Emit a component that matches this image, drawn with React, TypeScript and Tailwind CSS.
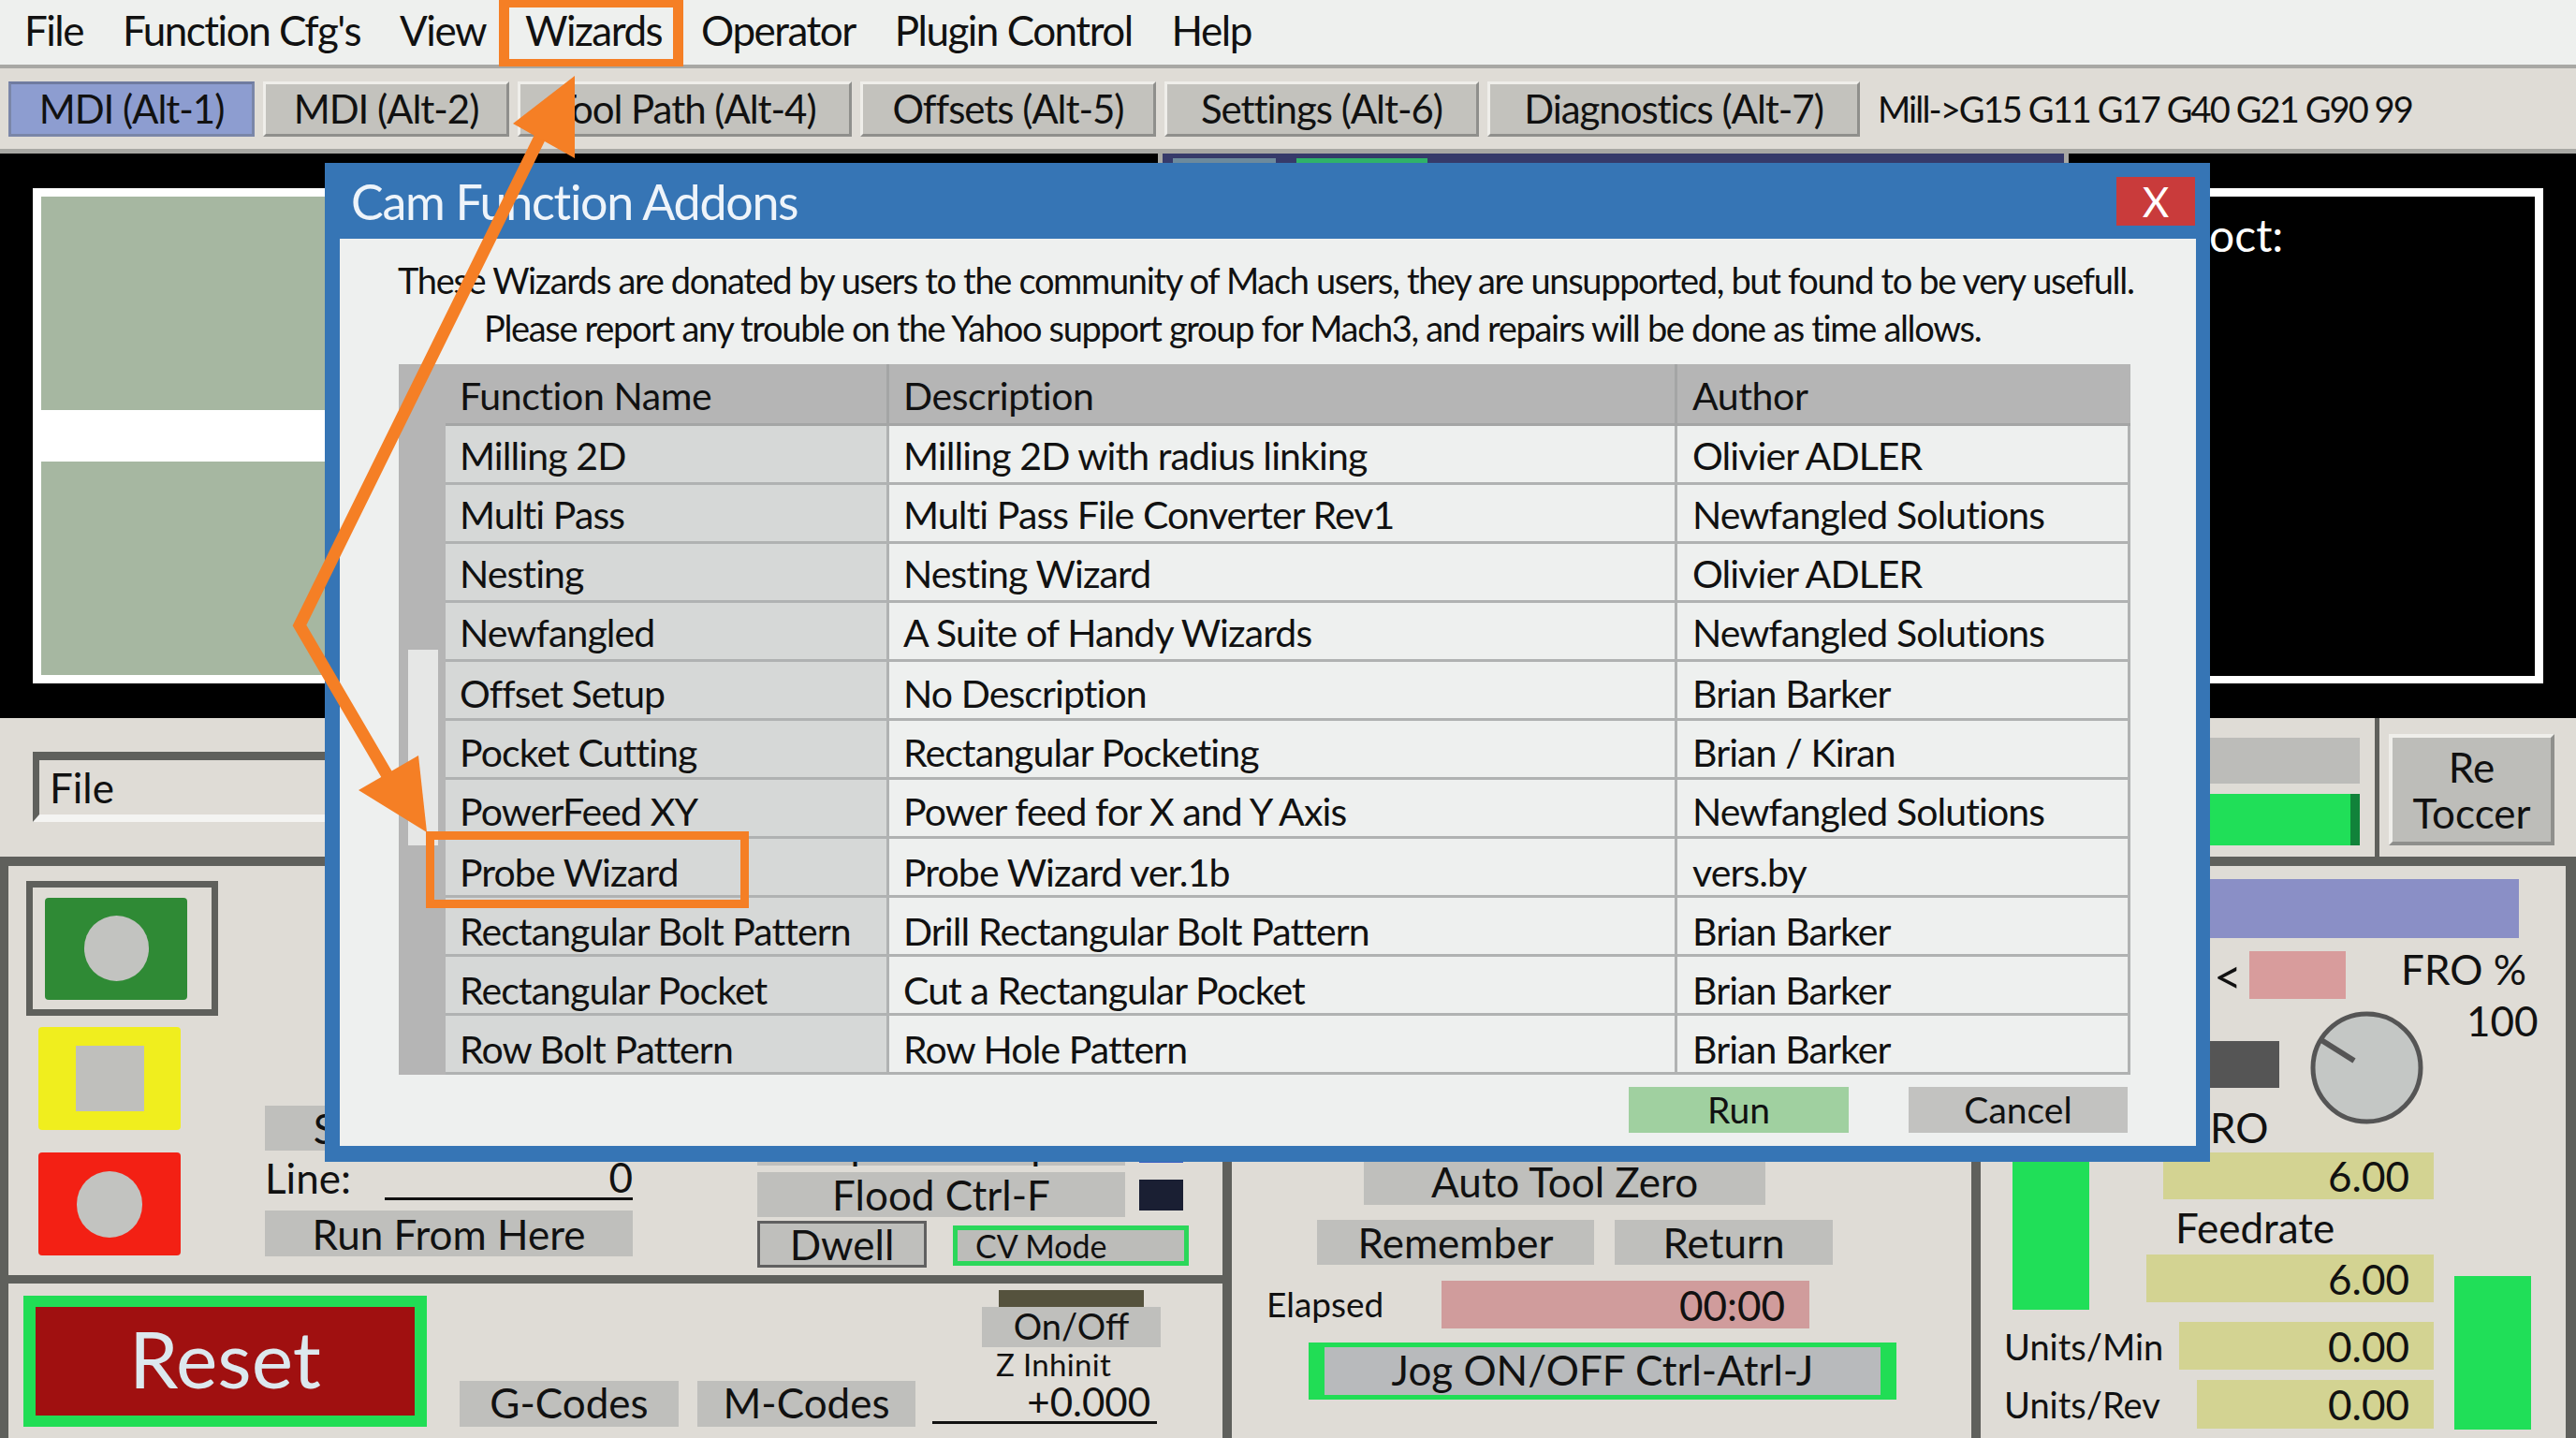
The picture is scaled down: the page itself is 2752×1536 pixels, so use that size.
const menus = ["File", "Function Cfg's", "View", "Wizards", "Operator", "Plugin Control", "Help"];

const tabs = [
  { label: "MDI (Alt-1)", w: "w-[263px]", active: true },
  { label: "MDI (Alt-2)", w: "w-[263px]" },
  { label: "Tool Path (Alt-4)", w: "w-[357px]" },
  { label: "Offsets (Alt-5)", w: "w-[316px]" },
  { label: "Settings (Alt-6)", w: "w-[336px]" },
  { label: "Diagnostics (Alt-7)", w: "w-[398px]" },
];

const rows = [
  ["Milling 2D", "Milling 2D with radius linking", "Olivier ADLER"],
  ["Multi Pass", "Multi Pass File Converter Rev1", "Newfangled Solutions"],
  ["Nesting", "Nesting Wizard", "Olivier ADLER"],
  ["Newfangled", "A Suite of Handy Wizards", "Newfangled Solutions"],
  ["Offset Setup", "No Description", "Brian Barker"],
  ["Pocket Cutting", "Rectangular Pocketing", "Brian / Kiran"],
  ["PowerFeed XY", "Power feed for X and Y Axis", "Newfangled Solutions"],
  ["Probe Wizard", "Probe Wizard ver.1b", "vers.by"],
  ["Rectangular Bolt Pattern", "Drill Rectangular Bolt Pattern", "Brian Barker"],
  ["Rectangular Pocket", "Cut a Rectangular Pocket", "Brian Barker"],
  ["Row Bolt Pattern", "Row Hole Pattern", "Brian Barker"],
];

function Btn({ className, children }: { className: string; children: React.ReactNode }) {
  return <div className={`flex shrink-0 items-center justify-center bg-[#bfbfbc] text-[#111] ${className}`}>{children}</div>;
}

function Dro({ className, value }: { className: string; value: string }) {
  return (
    <div className={`flex shrink-0 items-center justify-end bg-[#d3d392] pr-[26px] text-[#111] ${className}`}>{value}</div>
  );
}

function Dialog() {
  return (
    <div className="absolute left-[347px] top-[174px] flex h-[1067px] w-[2014px] flex-col bg-[#3675b5] pb-[17px] pl-[16px] pr-[15px]">
      <div className="flex h-[81px] shrink-0 items-center justify-between">
        <span className="pl-[12px] text-[52px] leading-none tracking-[-0.025em] text-[#eef4fa]">Cam Function Addons</span>
        <div className="mr-[1px] flex h-[52px] w-[84px] items-center justify-center bg-[#c93b3b] text-[44px] leading-none text-white">X</div>
      </div>
      <div className="min-h-0 flex-1 bg-[#eef0ef] pt-[19px] text-[#111]">
        <p className="whitespace-nowrap pl-[62px] text-[38px] leading-[51px] tracking-[-0.035em]">These Wizards are donated by users to the community of Mach users, they are unsupported, but found to be very usefull.</p>
        <p className="whitespace-nowrap pl-[154px] text-[38px] leading-[51px] tracking-[-0.035em]">Please report any trouble on the Yahoo support group for Mach3, and repairs will be done as time allows.</p>
        <div className="ml-[63px] mt-[13px] flex w-[1850px]">
          <div className="w-[50px] shrink-0 bg-[#b5b5b5] pl-[10px] pt-[305px]">
            <div className="h-[209px] w-[32px] bg-[#e6e7e6]" />
          </div>
          <div className="flex-1">
            <div className="grid h-[66px] grid-cols-[474px_842px_484px] bg-[#b5b5b5] text-[41px] tracking-[-0.01em]">
              <div className="flex items-center border-b-[3px] border-r-[3px] border-[#a4a5a5] pl-[15px] pt-[3px]">Function Name</div>
              <div className="flex items-center border-b-[3px] border-r-[3px] border-[#a4a5a5] pl-[15px] pt-[3px]">Description</div>
              <div className="flex items-center border-b-[3px] border-[#a4a5a5] pl-[16px] pt-[3px]">Author</div>
            </div>
            {rows.map((row, i) => {
              const nudge = i > 6 ? "pt-[10px]" : i > 3 ? "pt-[7px]" : "pt-[3px]";
              return (
                <div key={row[0]} className="grid h-[63px] grid-cols-[474px_842px_484px] text-[41px] tracking-[-0.022em]">
                  <div className={`flex items-center border-b-[3px] border-r-[3px] border-[#b0b2b2] bg-[#d6d8d7] pl-[15px] ${nudge}`}>{row[0]}</div>
                  <div className={`flex items-center border-b-[3px] border-r-[3px] border-[#b0b2b2] pl-[15px] ${nudge}`}>{row[1]}</div>
                  <div className={`flex items-center border-b-[3px] border-r-[3px] border-[#b0b2b2] pl-[16px] ${nudge}`}>{row[2]}</div>
                </div>
              );
            })}
          </div>
        </div>
        <div className="mt-[13px] flex justify-end gap-[64px] pr-[73px] text-[39px]">
          <div className="flex h-[49px] w-[235px] items-center justify-center bg-[#a0d0a0]">Run</div>
          <div className="flex h-[49px] w-[234px] items-center justify-center bg-[#c2c2c0]">Cancel</div>
        </div>
      </div>
    </div>
  );
}

export default function App() {
  return (
    <div className="relative flex h-[1536px] w-[2752px] flex-col overflow-hidden bg-[#dfdcd6] text-[44px] leading-none text-[#111] [font-family:Lato,sans-serif]">
      {/* menu bar */}
      <div className="flex h-[73px] shrink-0 items-center gap-[42px] border-b-[4px] border-[#a8a8a4] bg-[#eef0ee] pb-[6px] pl-[26px] text-[44px] tracking-[-0.034em]">
        {menus.map((m) => (
          <span key={m}>{m}</span>
        ))}
      </div>

      {/* tabs */}
      <div className="flex h-[91px] shrink-0 items-center gap-[9px] border-b-[5px] border-[#a8a8a4] pl-[9px]">
        {tabs.map((t) => (
          <div
            key={t.label}
            className={`flex h-[59px] items-center justify-center border-[3px] text-[42px] tracking-[-0.025em] ${t.w} ${
              t.active
                ? "border-b-[#7a86a8] border-l-[#7a86a8] border-r-[#7a86a8] border-t-[#6f7ba0] bg-[#8d9dd0]"
                : "border-b-[#8f8f8c] border-l-[#efeeea] border-r-[#8f8f8c] border-t-[#efeeea] bg-[#c3c2bd]"
            }`}
          >
            {t.label}
          </div>
        ))}
        <span className="ml-[10px] text-[38px] tracking-[-0.05em]">Mill-&gt;G15 G11 G17 G40 G21 G90 99</span>
      </div>

      {/* toolpath and program display */}
      <div className="grid h-[603px] shrink-0 grid-cols-[1237px_968px_1fr] bg-black">
        <div className="pl-[35px] pt-[37px]">
          <div className="flex h-[529px] w-[340px] flex-col border-y-[9px] border-l-[9px] border-white">
            <div className="h-[228px] bg-[#a6b7a1]" />
            <div className="h-[55px] bg-white" />
            <div className="flex-1 bg-[#a6b7a1]" />
          </div>
        </div>
        <div className="border-l-[5px] border-[#a8a8a4] bg-[#363a6a]">
          <div className="mt-[5px] flex h-[5px]">
            <div className="ml-[11px] w-[110px] bg-[#6d8a9c]" />
            <div className="ml-[22px] w-[140px] bg-[#2fb36a]" />
          </div>
        </div>
        <div className="border-l-[5px] border-[#a8a8a4] pl-[44px] pt-[37px]">
          <div className="h-[529px] w-[463px] border-x-[9px] border-b-[8px] border-t-[9px] border-white pl-[97px] pt-[17px] text-[48px] text-white">
            oct:
          </div>
        </div>
      </div>

      {/* file strip */}
      <div className="flex h-[148px] shrink-0">
        <div className="ml-[35px] mt-[36px] flex h-[75px] w-[320px] items-center border-b-[8px] border-l-[7px] border-t-[9px] border-b-[#f4f4f2] border-l-[#5f605c] border-t-[#5f605c] pl-[11px]">
          File
        </div>
        <div className="ml-auto mt-[21px] flex w-[160px] flex-col gap-[11px]">
          <div className="h-[49px] bg-[#bcbcb9]" />
          <div className="h-[55px] border-r-[10px] border-[#11823a] bg-[#20df58]" />
        </div>
        <div className="ml-[16px] w-[5px] bg-[#5f605c]" />
        <div className="ml-[10px] mr-[23px] mt-[17px] flex h-[119px] w-[177px] flex-col items-center justify-center border-[4px] border-b-[#8f8f8c] border-l-[#efeeea] border-r-[#8f8f8c] border-t-[#efeeea] bg-[#bdbdb9] leading-[49px]">
          <span>Re</span>
          <span>Toccer</span>
        </div>
      </div>

      {/* control panels */}
      <div className="grid min-h-0 flex-1 grid-cols-[1316px_800px_1fr] border-t-[10px] border-[#5f605c]">
        <div className="flex flex-col border-l-[9px] border-r-[10px] border-[#5f605c]">
          <div className="flex h-[446px] shrink-0 border-b-[9px] border-[#5f605c]">
            <div className="ml-[19px] w-[205px] shrink-0">
              <div className="mt-[16px] flex h-[144px] items-center border-[7px] border-[#5f605c] pl-[13px]">
                <div className="flex h-[109px] w-[152px] items-center justify-center rounded-[4px] bg-[#2f8a35]">
                  <div className="h-[70px] w-[69px] rounded-full bg-[#c2c3c0]" />
                </div>
              </div>
              <div className="ml-[13px] mt-[12px] flex h-[110px] w-[152px] items-center justify-center rounded-[4px] bg-[#f0ee1e]">
                <div className="h-[70px] w-[73px] bg-[#bfbfbc]" />
              </div>
              <div className="ml-[13px] mt-[24px] flex h-[110px] w-[152px] items-center justify-center rounded-[4px] bg-[#f32014]">
                <div className="h-[71px] w-[70px] rounded-full bg-[#c2c3c0]" />
              </div>
            </div>
            <div className="ml-[50px] flex w-[393px] shrink-0 flex-col pt-[256px]">
              <Btn className="h-[48px]"><span className="mr-[30px]">Set Next Line</span></Btn>
              <div className="mt-[11px] flex h-[42px] items-end justify-between">
                <span className="pb-[2px]">Line:</span>
                <span className="w-[265px] border-b-[3px] border-[#111] text-right">0</span>
              </div>
              <Btn className="mt-[11px] h-[49px]">Run From Here</Btn>
            </div>
            <div className="ml-[133px] flex w-[461px] shrink-0 flex-col pt-[271px]">
              <div className="flex h-[49px] gap-[15px]">
                <Btn className="h-[49px] w-[393px]">Spindle Stop</Btn>
                <div className="mt-[12px] h-[34px] w-[47px] bg-[#3a5fc4]" />
              </div>
              <div className="mt-[7px] flex gap-[15px]">
                <Btn className="h-[48px] w-[393px]">Flood Ctrl-F</Btn>
                <div className="mt-[8px] h-[33px] w-[47px] bg-[#1a1f33]" />
              </div>
              <div className="mt-[4px] flex gap-[28px]">
                <Btn className="h-[50px] w-[181px] border-[3px] border-[#606060]">Dwell</Btn>
                <div className="mt-[5px] flex h-[43px] w-[252px] items-center border-[5px] border-[#2bd75a] bg-[#bcbcb9] pl-[19px] text-[34px]">CV Mode</div>
              </div>
            </div>
          </div>
          <div className="flex min-h-0 flex-1">
            <div className="ml-[16px] mt-[13px] flex h-[140px] w-[431px] shrink-0 items-center justify-center border-x-[13px] border-y-[12px] border-[#21dd55] bg-[#a01010] pb-[6px] text-[84px] text-[#dce8ee]">
              Reset
            </div>
            <Btn className="ml-[35px] mt-[104px] h-[49px] w-[234px] pb-[3px]">G-Codes</Btn>
            <Btn className="ml-[20px] mt-[104px] h-[49px] w-[233px] pb-[3px]">M-Codes</Btn>
            <div className="ml-[18px] mt-[7px] flex w-[240px] shrink-0 flex-col">
              <div className="ml-[71px] h-[18px] w-[155px] bg-[#55523d]" />
              <Btn className="ml-[53px] h-[43px] w-[191px] pb-[3px] text-[38px]">On/Off</Btn>
              <span className="ml-[68px] mt-[2px] text-[33px] tracking-[0.01em]">Z Inhinit</span>
              <span className="mt-[2px] border-b-[3px] border-[#111] pr-[7px] text-right text-[42px]">+0.000</span>
            </div>
          </div>
        </div>

        <div className="border-r-[10px] border-[#5f605c] pt-[312px]">
          <Btn className="ml-[141px] h-[50px] w-[429px]">Auto Tool Zero</Btn>
          <div className="ml-[91px] mt-[16px] flex gap-[22px]">
            <Btn className="h-[48px] w-[296px]">Remember</Btn>
            <Btn className="h-[48px] w-[233px]">Return</Btn>
          </div>
          <div className="ml-[37px] mt-[17px] flex items-center">
            <span className="w-[187px] pb-[2px] text-[37px]">Elapsed</span>
            <div className="flex h-[51px] w-[393px] items-center justify-end bg-[#d09c9c] pr-[26px]">00:00</div>
          </div>
          <div className="ml-[82px] mt-[15px] flex h-[61px] w-[628px] items-center justify-center border-x-[17px] border-y-[5px] border-[#21dd55] bg-[#b8babc] pb-[4px]">
            Jog ON/OFF Ctrl-Atrl-J
          </div>
        </div>

        <div className="border-r-[11px] border-[#5f605c]">
          <div className="ml-[14px] mt-[14px] h-[63px] w-[561px] bg-[#8a8fc6]" />
          <div className="mt-[14px] flex h-[51px] pl-[249px]">
            <span className="flex w-[38px] items-center text-[52px]">&lt;</span>
            <div className="h-[51px] w-[103px] bg-[#d89c9c]" />
            <span className="ml-[59px] mt-[-3px]">FRO %</span>
          </div>
          <div className="mt-[13px] flex h-[121px] pl-[200px]">
            <div className="mt-[32px] h-[50px] w-[119px] bg-[#555]" />
            <svg className="ml-[33px] h-[121px] w-[121px]" viewBox="0 0 121 121">
              <circle cx="60.5" cy="60.5" r="57.5" fill="#c4c7c5" stroke="#555" strokeWidth="5" />
              <path d="M12 31 L47 53" stroke="#555" strokeWidth="6" />
            </svg>
            <span className="ml-[46px] mt-[-12px]">100</span>
          </div>
          <div className="ml-[245px] mt-[-19px] h-[37px]">RO</div>
          <div className="mt-[12px] flex">
            <div className="w-[484px] shrink-0">
              <div className="flex h-[168px]">
                <div className="ml-[34px] w-[82px] bg-[#20df58]" />
                <div className="flex w-[368px] flex-col items-end">
                  <Dro className="h-[50px] w-[289px]" value="6.00" />
                  <span className="flex h-[59px] items-center self-start pl-[92px]">Feedrate</span>
                  <Dro className="h-[51px] w-[307px]" value="6.00" />
                </div>
              </div>
              <div className="mt-[13px] flex items-center justify-between pl-[25px]">
                <span className="text-[38px]">Units/Min</span>
                <Dro className="h-[51px] w-[272px]" value="0.00" />
              </div>
              <div className="mt-[11px] flex items-center justify-between pl-[25px]">
                <span className="text-[38px]">Units/Rev</span>
                <Dro className="h-[52px] w-[253px]" value="0.00" />
              </div>
            </div>
            <div className="ml-[22px] mt-[132px] h-[164px] w-[82px] bg-[#20df58]" />
          </div>
        </div>
      </div>

      <Dialog />

      {/* orange annotations */}
      <div className="absolute left-[533px] top-0 h-[71px] w-[197px] border-x-[11px] border-y-[8px] border-[#f57f25]" />
      <div className="absolute left-[455px] top-[888px] h-[82px] w-[345px] border-[9px] border-[#f57f25]" />
      <svg className="absolute left-0 top-0 h-[1536px] w-[2752px]" viewBox="0 0 2752 1536" fill="none">
        <path d="M585 130 L320 668 L437 868" stroke="#f57f25" strokeWidth="13" strokeLinejoin="miter" />
        <path d="M614 81 L548 132 L614 169 Z" fill="#f57f25" />
        <path d="M456 889 L383 844 L447 807 Z" fill="#f57f25" />
      </svg>
    </div>
  );
}
